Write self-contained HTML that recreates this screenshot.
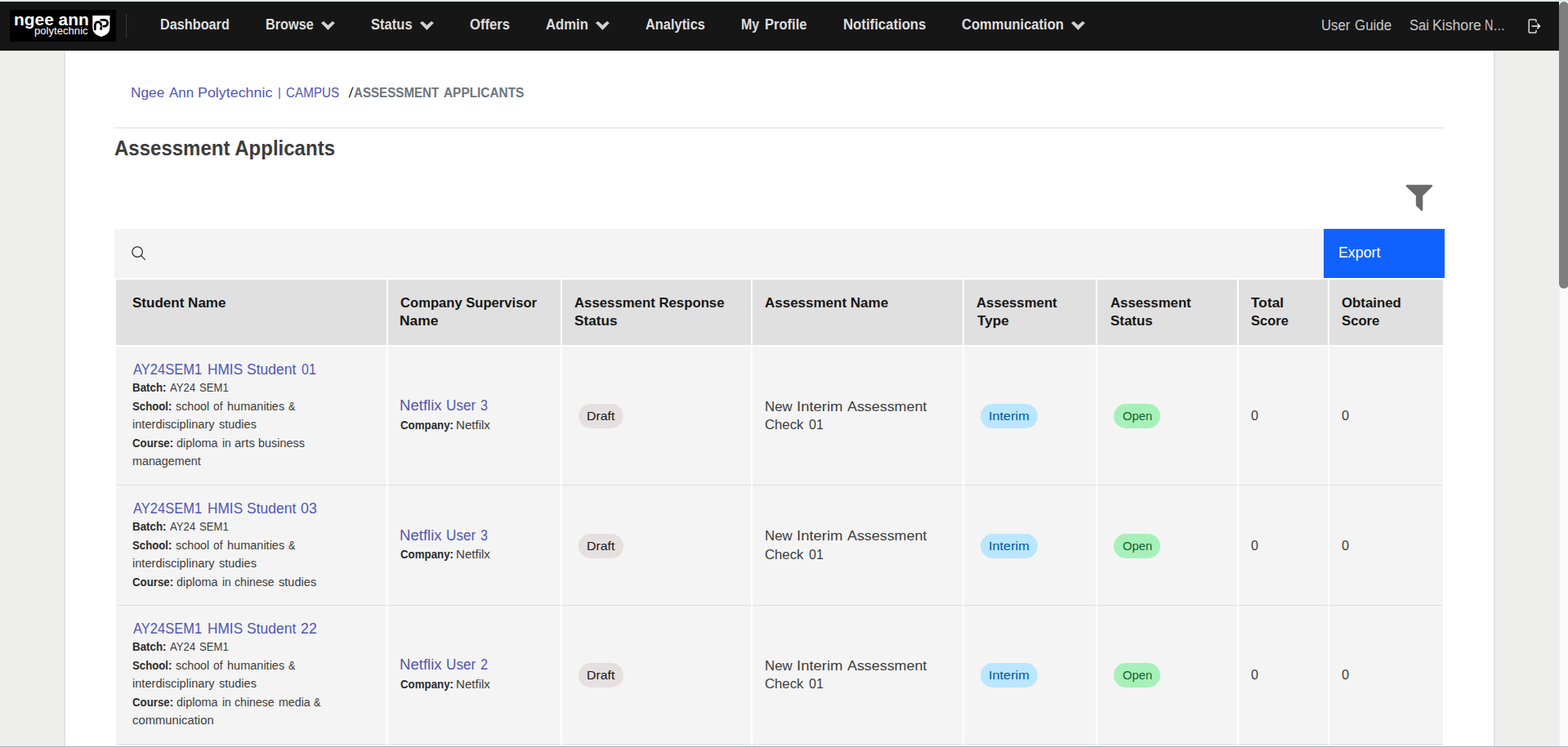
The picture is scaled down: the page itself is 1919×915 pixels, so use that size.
<!DOCTYPE html>
<html lang="en">
<head>
<meta charset="utf-8">
<title>Assessment Applicants</title>
<style>
*{box-sizing:border-box;margin:0;padding:0}
html,body{width:1919px;height:915px;overflow:hidden}
body{position:relative;background:#eeeeec;font-family:"Liberation Sans",Arial,sans-serif;color:#161616}
a{text-decoration:none}
.t{position:absolute;display:block;white-space:pre;line-height:1;transform-origin:0 0;margin:0}
.abs{position:absolute}
.topstrip{position:absolute;left:0;top:0;width:1919px;height:2px;background:linear-gradient(#dbe5e2 0,#dbe5e2 50%,#e4ecea 50%,#e4ecea 100%);z-index:5}
header.nav{position:absolute;left:0;top:2px;width:1908px;height:60px;background:#161616;z-index:3}
.logo{position:absolute;left:12px;top:10px;width:130px;height:39px;background:#000;display:block}
.divider{position:absolute;left:154px;top:15px;width:1px;height:30px;background:#393939}
main.container{position:absolute;left:80px;top:62px;width:1748px;height:853px;background:#fff;box-shadow:0 0 3px rgba(0,10,86,.18)}
hr.rule{position:absolute;left:60px;top:94px;width:1628px;height:1px;border:0;background:#e0e0e0}
.toolbar{position:absolute;left:60px;top:218px;width:1628px;height:60px;background:#f4f4f4}
.export{position:absolute;left:1480px;top:0;width:148px;height:60px;background:#0f62fe;border:0;display:block}
table.grid{position:absolute;left:62px;top:280px;width:1624px;border-collapse:separate;border-spacing:0;table-layout:fixed}
table.grid th,table.grid td{position:relative;padding:0;border-right:2px solid #fff;text-align:left;font-weight:normal;vertical-align:top}
table.grid th:last-child,table.grid td:last-child{border-right:0}
table.grid th{height:82px;background:#e0e0e0;border-bottom:2px solid #fff}
table.grid td{background:#f4f4f4;box-shadow:inset 0 -1px 0 #e0e0e0}
.tag{position:absolute;height:30px;border-radius:15px;display:block}
.tag-gray{background:#e5e0df}
.tag-blue{background:#bae6ff}
.tag-green{background:#a7f0ba}
.scroll{position:absolute;left:1908px;top:2px;width:11px;height:911px;background:linear-gradient(to right,#f1f1f0 0,#f7f7f7 1.5px,#fafafa 3px);z-index:4;overflow:hidden}
.thumb{position:absolute;left:0;top:0;width:12px;height:351px;border-radius:6px;background:#7e7e7e}
.bottomstrip{position:absolute;left:0;top:913px;width:1919px;height:2px;background:linear-gradient(#9eabb1 0,#9eabb1 50%,#d6e5ee 50%,#d6e5ee 100%);z-index:6}
</style>
</head>
<body>
<div class="topstrip"></div>
<header class="nav">
<a class="logo" href="#">
<span class="t" style="left:5.00px;top:1.00px;font-size:21px;font-weight:700;color:#ffffff;transform:scaleX(0.9955);">ngee ann</span>
<span class="t" style="left:30.00px;top:20.00px;font-size:12px;font-weight:400;color:#ffffff;transform:scaleX(1.0932);">polytechnic</span>
<svg class="abs" style="left:100px;top:6px" width="24" height="28" viewBox="112 18 24 28"><path d="M113.3 19 H134.4 V34 Q134.4 42 123.85 45.1 Q113.3 42 113.3 34 Z" fill="#fff"/><path d="M116.3 35.8 V30.6 A3.7 3.7 0 0 1 123.7 30.6" fill="none" stroke="#000" stroke-width="2.8" stroke-linecap="round"/><path d="M123.7 33.6 V35.6" fill="none" stroke="#000" stroke-width="2.8" stroke-linecap="round"/><path d="M123.8 24.4 H127.85 A3.85 3.85 0 0 1 127.85 32.1 H126.6" fill="none" stroke="#000" stroke-width="2.8" stroke-linecap="round"/></svg>
</a>
<span class="divider"></span>
<nav>
<a class="t" href="#" style="left:196.00px;top:19.00px;font-size:18px;font-weight:700;color:#dedede;transform:scaleX(0.9026);">Dashboard</a>
<a class="t" href="#" style="left:325.00px;top:19.00px;font-size:18px;font-weight:700;color:#dedede;transform:scaleX(0.9033);">Browse</a>
<a class="t" href="#" style="left:454.00px;top:19.00px;font-size:18px;font-weight:700;color:#dedede;transform:scaleX(0.9196);">Status</a>
<a class="t" href="#" style="left:575.00px;top:19.00px;font-size:18px;font-weight:700;color:#dedede;transform:scaleX(0.9222);">Offers</a>
<a class="t" href="#" style="left:668.00px;top:19.00px;font-size:18px;font-weight:700;color:#dedede;transform:scaleX(0.9267);">Admin</a>
<a class="t" href="#" style="left:790.00px;top:19.00px;font-size:18px;font-weight:700;color:#dedede;transform:scaleX(0.9107);">Analytics</a>
<a href="#"><span class="t" style="left:907.00px;top:19.00px;font-size:18px;font-weight:700;color:#dedede;transform:scaleX(0.8880);">My </span><span class="t" style="left:936.00px;top:19.00px;font-size:18px;font-weight:700;color:#dedede;transform:scaleX(0.9179);">Profile</span></a>
<a class="t" href="#" style="left:1032.00px;top:19.00px;font-size:18px;font-weight:700;color:#dedede;transform:scaleX(0.9303);">Notifications</a>
<a class="t" href="#" style="left:1177.00px;top:19.00px;font-size:18px;font-weight:700;color:#dedede;transform:scaleX(0.9179);">Communication</a>
<svg class="abs" style="left:393.0px;top:23.8px" width="17" height="11" viewBox="0 0 17 11"><polygon fill="#d2d2d2" stroke="#d2d2d2" stroke-width="0.6" stroke-linejoin="round" points="0.35,2.1 3.0,0.3 8.45,5.1 13.9,0.3 16.55,2.1 8.45,10.45"/></svg>
<svg class="abs" style="left:514.0px;top:23.8px" width="17" height="11" viewBox="0 0 17 11"><polygon fill="#d2d2d2" stroke="#d2d2d2" stroke-width="0.6" stroke-linejoin="round" points="0.35,2.1 3.0,0.3 8.45,5.1 13.9,0.3 16.55,2.1 8.45,10.45"/></svg>
<svg class="abs" style="left:729.0px;top:23.8px" width="17" height="11" viewBox="0 0 17 11"><polygon fill="#d2d2d2" stroke="#d2d2d2" stroke-width="0.6" stroke-linejoin="round" points="0.35,2.1 3.0,0.3 8.45,5.1 13.9,0.3 16.55,2.1 8.45,10.45"/></svg>
<svg class="abs" style="left:1311.0px;top:23.8px" width="17" height="11" viewBox="0 0 17 11"><polygon fill="#d2d2d2" stroke="#d2d2d2" stroke-width="0.6" stroke-linejoin="round" points="0.35,2.1 3.0,0.3 8.45,5.1 13.9,0.3 16.55,2.1 8.45,10.45"/></svg>
</nav>
<a href="#"><span class="t" style="left:1617.00px;top:20.00px;font-size:18px;font-weight:400;color:#c9c9c9;transform:scaleX(0.9263);">User </span><span class="t" style="left:1658.00px;top:20.00px;font-size:18px;font-weight:400;color:#c9c9c9;transform:scaleX(0.9380);">Guide</span></a>
<a href="#"><span class="t" style="left:1725.00px;top:20.00px;font-size:18px;font-weight:400;color:#c9c9c9;transform:scaleX(0.9145);">Sai </span><span class="t" style="left:1753.00px;top:20.00px;font-size:18px;font-weight:400;color:#c9c9c9;transform:scaleX(0.9806);">Kishore </span><span class="t" style="left:1817.00px;top:20.00px;font-size:18px;font-weight:400;color:#c9c9c9;transform:scaleX(0.8026);">N…</span></a>
<svg class="abs" style="left:1868px;top:20px" width="20" height="20" viewBox="0 0 20 20" fill="none" stroke="#dcdcdc" stroke-width="1.5"><path d="M12 5.2 V3.2 A1.2 1.2 0 0 0 10.8 2 H4.4 A1.2 1.2 0 0 0 3.2 3.2 V16.8 A1.2 1.2 0 0 0 4.4 18 H10.8 A1.2 1.2 0 0 0 12 16.8 V14.8"/><path stroke="#f0f0f0" d="M6.6 10 H16.2 M13.3 6.8 L16.5 10 L13.3 13.2"/></svg>
</header>
<main class="container">
<nav class="breadcrumb" aria-label="breadcrumb">
<a href="#"><span class="t" style="left:80.00px;top:43.00px;font-size:17px;font-weight:400;color:#5257b0;transform:scaleX(1.0173);">Ngee </span><span class="t" style="left:127.00px;top:43.00px;font-size:17px;font-weight:400;color:#5257b0;transform:scaleX(1.0016);">Ann </span><span class="t" style="left:162.00px;top:43.00px;font-size:17px;font-weight:400;color:#5257b0;transform:scaleX(1.0512);">Polytechnic </span><span class="t" style="left:260.00px;top:43.00px;font-size:15px;font-weight:400;color:#5257b0;transform:scaleX(1.0000);">|</span></a>
<a class="t" href="#" style="left:270.00px;top:44.00px;font-size:16px;font-weight:400;color:#5257b0;transform:scaleX(0.9530);">CAMPUS</a>
<span class="t" style="left:349.00px;top:43.00px;font-size:17px;font-weight:400;color:#000000;transform:scaleX(0.7615) skewX(-12deg);-webkit-text-stroke:0.35px #000000;">/</span>
<span><span class="t" style="left:353.00px;top:44.00px;font-size:16px;font-weight:700;color:#6c757d;transform:scaleX(0.9457);">ASSESSMENT </span><span class="t" style="left:463.00px;top:44.00px;font-size:16px;font-weight:700;color:#6c757d;transform:scaleX(0.9617);">APPLICANTS</span></span>
</nav>
<hr class="rule">
<h1 class="t" style="left:60.00px;top:107.00px;font-size:25.5px;font-weight:700;color:#3d3d3d;transform:scaleX(0.9416);">Assessment Applicants</h1>
<svg class="abs" style="left:1640px;top:163px" width="34" height="34" viewBox="0 0 34 34"><polygon fill="#6a6a6a" stroke="#6a6a6a" stroke-width="0.4" stroke-linejoin="round" points="1.5,1.3 32.3,1.3 32.8,1.9 32.8,3.0 21.1,14.5 21.1,32.3 20.5,32.8 19.5,32.8 13.1,26.4 13.1,14.5 1.0,3.0 1.0,1.9"/></svg>
<div class="toolbar">
<svg class="abs" style="left:20px;top:20px" width="20" height="20" viewBox="0 0 32 32"><path fill="#393939" d="M29,27.5859l-7.5521-7.5521a11.0177,11.0177,0,1,0-1.4141,1.4141L27.5859,29ZM4,13a9,9,0,1,1,9,9A9.01,9.01,0,0,1,4,13Z"/></svg>
<button class="export" type="button"><span class="t" style="left:18.00px;top:20.00px;font-size:18px;font-weight:400;color:#ffffff;transform:scaleX(0.9881);">Export</span></button>
</div>
<table class="grid">
<colgroup><col style="width:333px"><col style="width:213px"><col style="width:233px"><col style="width:259px"><col style="width:163px"><col style="width:173px"><col style="width:111px"><col style="width:139px"></colgroup>
<thead><tr>
<th scope="col"><span class="t" style="left:20.00px;top:20.00px;font-size:17px;font-weight:700;color:#161616;transform:scaleX(1.0016);">Student Name</span></th>
<th scope="col"><span class="t" style="left:15.00px;top:20.00px;font-size:17px;font-weight:700;color:#161616;transform:scaleX(0.9766);">Company Supervisor</span><span class="t" style="left:14.00px;top:42.00px;font-size:17px;font-weight:700;color:#161616;transform:scaleX(1.0246);">Name</span></th>
<th scope="col"><span class="t" style="left:15.00px;top:20.00px;font-size:17px;font-weight:700;color:#161616;transform:scaleX(0.9859);">Assessment Response</span><span class="t" style="left:15.00px;top:42.00px;font-size:17px;font-weight:700;color:#161616;transform:scaleX(1.0095);">Status</span></th>
<th scope="col"><span class="t" style="left:15.00px;top:20.00px;font-size:17px;font-weight:700;color:#161616;transform:scaleX(0.9993);">Assessment Name</span></th>
<th scope="col"><span class="t" style="left:15.00px;top:20.00px;font-size:17px;font-weight:700;color:#161616;transform:scaleX(0.9854);">Assessment</span><span class="t" style="left:16.00px;top:42.00px;font-size:17px;font-weight:700;color:#161616;transform:scaleX(1.0071);">Type</span></th>
<th scope="col"><span class="t" style="left:16.00px;top:20.00px;font-size:17px;font-weight:700;color:#161616;transform:scaleX(0.9854);">Assessment</span><span class="t" style="left:16.00px;top:42.00px;font-size:17px;font-weight:700;color:#161616;transform:scaleX(0.9955);">Status</span></th>
<th scope="col"><span class="t" style="left:15.00px;top:20.00px;font-size:17px;font-weight:700;color:#161616;transform:scaleX(1.0210);">Total</span><span class="t" style="left:15.00px;top:42.00px;font-size:17px;font-weight:700;color:#161616;transform:scaleX(0.9697);">Score</span></th>
<th scope="col"><span class="t" style="left:15.00px;top:20.00px;font-size:17px;font-weight:700;color:#161616;transform:scaleX(0.9870);">Obtained</span><span class="t" style="left:15.00px;top:42.00px;font-size:17px;font-weight:700;color:#161616;transform:scaleX(0.9816);">Score</span></th>
</tr></thead>
<tbody>
<tr style="height:170px">
<td style="height:170px"><a href="#"><span class="t" style="left:21.00px;top:19.00px;font-size:18px;font-weight:400;color:#5257b0;transform:scaleX(0.9184);">AY24SEM1 </span><span class="t" style="left:112.00px;top:19.00px;font-size:18px;font-weight:400;color:#5257b0;transform:scaleX(0.9593);">HMIS </span><span class="t" style="left:160.00px;top:19.00px;font-size:18px;font-weight:400;color:#5257b0;transform:scaleX(0.9746);">Student </span><span class="t" style="left:227.00px;top:19.00px;font-size:18px;font-weight:400;color:#5257b0;transform:scaleX(0.8868);">01</span></a><b class="t" style="left:20.00px;top:43.00px;font-size:14px;font-weight:700;color:#2c2c2c;transform:scaleX(0.9535);">Batch:</b><span><span class="t" style="left:66.00px;top:43.00px;font-size:14px;font-weight:400;color:#3d3d3d;transform:scaleX(0.9423);">AY24 </span><span class="t" style="left:102.00px;top:43.00px;font-size:14px;font-weight:400;color:#3d3d3d;transform:scaleX(0.9356);">SEM1</span></span><b class="t" style="left:20.00px;top:66.00px;font-size:14px;font-weight:700;color:#2c2c2c;transform:scaleX(0.9417);">School:</b><span><span class="t" style="left:73.00px;top:66.00px;font-size:14px;font-weight:400;color:#3d3d3d;transform:scaleX(1.0181);">school </span><span class="t" style="left:119.00px;top:66.00px;font-size:14px;font-weight:400;color:#3d3d3d;transform:scaleX(0.9821);">of </span><span class="t" style="left:136.00px;top:66.00px;font-size:14px;font-weight:400;color:#3d3d3d;transform:scaleX(1.0368);">humanities </span><span class="t" style="left:211.00px;top:66.00px;font-size:14px;font-weight:400;color:#3d3d3d;transform:scaleX(0.9029);">&amp;</span></span><span><span class="t" style="left:20.00px;top:88.00px;font-size:14px;font-weight:400;color:#3d3d3d;transform:scaleX(1.0427);">interdisciplinary </span><span class="t" style="left:126.00px;top:88.00px;font-size:14px;font-weight:400;color:#3d3d3d;transform:scaleX(1.0345);">studies</span></span><b class="t" style="left:20.00px;top:111.00px;font-size:14px;font-weight:700;color:#2c2c2c;transform:scaleX(0.9461);">Course:</b><span><span class="t" style="left:74.00px;top:111.00px;font-size:14px;font-weight:400;color:#3d3d3d;transform:scaleX(1.0294);">diploma </span><span class="t" style="left:130.00px;top:111.00px;font-size:14px;font-weight:400;color:#3d3d3d;transform:scaleX(0.9962);">in </span><span class="t" style="left:145.00px;top:111.00px;font-size:14px;font-weight:400;color:#3d3d3d;transform:scaleX(1.0675);">arts </span><span class="t" style="left:174.00px;top:111.00px;font-size:14px;font-weight:400;color:#3d3d3d;transform:scaleX(1.0295);">business</span></span><span class="t" style="left:20.00px;top:133.00px;font-size:14px;font-weight:400;color:#3d3d3d;transform:scaleX(1.0232);">management</span></td>
<td><a href="#"><span class="t" style="left:14.00px;top:63.00px;font-size:18px;font-weight:400;color:#5257b0;transform:scaleX(1.0324);">Netflix </span><span class="t" style="left:71.00px;top:63.00px;font-size:18px;font-weight:400;color:#5257b0;transform:scaleX(0.9540);">User </span><span class="t" style="left:113.00px;top:63.00px;font-size:18px;font-weight:400;color:#5257b0;transform:scaleX(0.8931);">3</span></a><b class="t" style="left:15.00px;top:89.00px;font-size:14px;font-weight:700;color:#2c2c2c;transform:scaleX(0.9493);">Company:</b><span class="t" style="left:83.00px;top:89.00px;font-size:14px;font-weight:400;color:#3d3d3d;transform:scaleX(1.0761);">Netfilx</span></td>
<td><span class="tag tag-gray" style="left:20px;top:70.0px;width:55px"><span class="t" style="left:10.00px;top:7.00px;font-size:15px;font-weight:400;color:#171414;transform:scaleX(1.0589);">Draft</span></span></td>
<td><span><span class="t" style="left:15.00px;top:65.00px;font-size:17px;font-weight:400;color:#3d3d3d;transform:scaleX(0.9905);">New </span><span class="t" style="left:54.00px;top:65.00px;font-size:17px;font-weight:400;color:#3d3d3d;transform:scaleX(1.0874);">Interim </span><span class="t" style="left:116.00px;top:65.00px;font-size:17px;font-weight:400;color:#3d3d3d;transform:scaleX(1.0508);">Assessment</span></span><span><span class="t" style="left:15.00px;top:87.00px;font-size:17px;font-weight:400;color:#3d3d3d;transform:scaleX(0.9824);">Check </span><span class="t" style="left:69.00px;top:87.00px;font-size:17px;font-weight:400;color:#3d3d3d;transform:scaleX(0.9406);">01</span></span></td>
<td><span class="tag tag-blue" style="left:20px;top:70.0px;width:70px"><span class="t" style="left:10.00px;top:7.00px;font-size:15px;font-weight:400;color:#00539a;transform:scaleX(1.0843);">Interim</span></span></td>
<td><span class="tag tag-green" style="left:20px;top:70.0px;width:57px"><span class="t" style="left:11.00px;top:7.00px;font-size:15px;font-weight:400;color:#0e6027;transform:scaleX(0.9868);">Open</span></span></td>
<td><span class="t" style="left:15.00px;top:76.00px;font-size:17px;font-weight:400;color:#3d3d3d;transform:scaleX(0.9524);">0</span></td>
<td><span class="t" style="left:15.00px;top:76.00px;font-size:17px;font-weight:400;color:#3d3d3d;transform:scaleX(0.9624);">0</span></td>
</tr>
<tr style="height:147px">
<td style="height:147px"><a href="#"><span class="t" style="left:21.00px;top:19.00px;font-size:18px;font-weight:400;color:#5257b0;transform:scaleX(0.9184);">AY24SEM1 </span><span class="t" style="left:112.00px;top:19.00px;font-size:18px;font-weight:400;color:#5257b0;transform:scaleX(0.9593);">HMIS </span><span class="t" style="left:160.00px;top:19.00px;font-size:18px;font-weight:400;color:#5257b0;transform:scaleX(0.9746);">Student </span><span class="t" style="left:226.00px;top:19.00px;font-size:18px;font-weight:400;color:#5257b0;transform:scaleX(0.9887);">03</span></a><b class="t" style="left:20.00px;top:43.00px;font-size:14px;font-weight:700;color:#2c2c2c;transform:scaleX(0.9535);">Batch:</b><span><span class="t" style="left:66.00px;top:43.00px;font-size:14px;font-weight:400;color:#3d3d3d;transform:scaleX(0.9423);">AY24 </span><span class="t" style="left:102.00px;top:43.00px;font-size:14px;font-weight:400;color:#3d3d3d;transform:scaleX(0.9356);">SEM1</span></span><b class="t" style="left:20.00px;top:66.00px;font-size:14px;font-weight:700;color:#2c2c2c;transform:scaleX(0.9417);">School:</b><span><span class="t" style="left:73.00px;top:66.00px;font-size:14px;font-weight:400;color:#3d3d3d;transform:scaleX(1.0181);">school </span><span class="t" style="left:119.00px;top:66.00px;font-size:14px;font-weight:400;color:#3d3d3d;transform:scaleX(0.9821);">of </span><span class="t" style="left:136.00px;top:66.00px;font-size:14px;font-weight:400;color:#3d3d3d;transform:scaleX(1.0368);">humanities </span><span class="t" style="left:211.00px;top:66.00px;font-size:14px;font-weight:400;color:#3d3d3d;transform:scaleX(0.9029);">&amp;</span></span><span><span class="t" style="left:20.00px;top:88.00px;font-size:14px;font-weight:400;color:#3d3d3d;transform:scaleX(1.0427);">interdisciplinary </span><span class="t" style="left:126.00px;top:88.00px;font-size:14px;font-weight:400;color:#3d3d3d;transform:scaleX(1.0345);">studies</span></span><b class="t" style="left:20.00px;top:111.00px;font-size:14px;font-weight:700;color:#2c2c2c;transform:scaleX(0.9461);">Course:</b><span><span class="t" style="left:74.00px;top:111.00px;font-size:14px;font-weight:400;color:#3d3d3d;transform:scaleX(1.0294);">diploma </span><span class="t" style="left:130.00px;top:111.00px;font-size:14px;font-weight:400;color:#3d3d3d;transform:scaleX(0.9962);">in </span><span class="t" style="left:145.00px;top:111.00px;font-size:14px;font-weight:400;color:#3d3d3d;transform:scaleX(1.0077);">chinese </span><span class="t" style="left:199.00px;top:111.00px;font-size:14px;font-weight:400;color:#3d3d3d;transform:scaleX(1.0435);">studies</span></span></td>
<td><a href="#"><span class="t" style="left:14.00px;top:52.00px;font-size:18px;font-weight:400;color:#5257b0;transform:scaleX(1.0324);">Netflix </span><span class="t" style="left:71.00px;top:52.00px;font-size:18px;font-weight:400;color:#5257b0;transform:scaleX(0.9540);">User </span><span class="t" style="left:113.00px;top:52.00px;font-size:18px;font-weight:400;color:#5257b0;transform:scaleX(0.8931);">3</span></a><b class="t" style="left:15.00px;top:77.00px;font-size:14px;font-weight:700;color:#2c2c2c;transform:scaleX(0.9493);">Company:</b><span class="t" style="left:83.00px;top:77.00px;font-size:14px;font-weight:400;color:#3d3d3d;transform:scaleX(1.0761);">Netfilx</span></td>
<td><span class="tag tag-gray" style="left:20px;top:59.0px;width:55px"><span class="t" style="left:10.00px;top:7.00px;font-size:15px;font-weight:400;color:#171414;transform:scaleX(1.0589);">Draft</span></span></td>
<td><span><span class="t" style="left:15.00px;top:53.00px;font-size:17px;font-weight:400;color:#3d3d3d;transform:scaleX(0.9905);">New </span><span class="t" style="left:54.00px;top:53.00px;font-size:17px;font-weight:400;color:#3d3d3d;transform:scaleX(1.0874);">Interim </span><span class="t" style="left:116.00px;top:53.00px;font-size:17px;font-weight:400;color:#3d3d3d;transform:scaleX(1.0508);">Assessment</span></span><span><span class="t" style="left:15.00px;top:76.00px;font-size:17px;font-weight:400;color:#3d3d3d;transform:scaleX(0.9824);">Check </span><span class="t" style="left:69.00px;top:76.00px;font-size:17px;font-weight:400;color:#3d3d3d;transform:scaleX(0.9406);">01</span></span></td>
<td><span class="tag tag-blue" style="left:20px;top:59.0px;width:70px"><span class="t" style="left:10.00px;top:7.00px;font-size:15px;font-weight:400;color:#00539a;transform:scaleX(1.0843);">Interim</span></span></td>
<td><span class="tag tag-green" style="left:20px;top:59.0px;width:57px"><span class="t" style="left:11.00px;top:7.00px;font-size:15px;font-weight:400;color:#0e6027;transform:scaleX(0.9868);">Open</span></span></td>
<td><span class="t" style="left:15.00px;top:65.00px;font-size:17px;font-weight:400;color:#3d3d3d;transform:scaleX(0.9524);">0</span></td>
<td><span class="t" style="left:15.00px;top:65.00px;font-size:17px;font-weight:400;color:#3d3d3d;transform:scaleX(0.9624);">0</span></td>
</tr>
<tr style="height:170px">
<td style="height:170px"><a href="#"><span class="t" style="left:21.00px;top:19.00px;font-size:18px;font-weight:400;color:#5257b0;transform:scaleX(0.9184);">AY24SEM1 </span><span class="t" style="left:112.00px;top:19.00px;font-size:18px;font-weight:400;color:#5257b0;transform:scaleX(0.9593);">HMIS </span><span class="t" style="left:160.00px;top:19.00px;font-size:18px;font-weight:400;color:#5257b0;transform:scaleX(0.9746);">Student </span><span class="t" style="left:226.00px;top:19.00px;font-size:18px;font-weight:400;color:#5257b0;transform:scaleX(0.9871);">22</span></a><b class="t" style="left:20.00px;top:43.00px;font-size:14px;font-weight:700;color:#2c2c2c;transform:scaleX(0.9535);">Batch:</b><span><span class="t" style="left:66.00px;top:43.00px;font-size:14px;font-weight:400;color:#3d3d3d;transform:scaleX(0.9423);">AY24 </span><span class="t" style="left:102.00px;top:43.00px;font-size:14px;font-weight:400;color:#3d3d3d;transform:scaleX(0.9356);">SEM1</span></span><b class="t" style="left:20.00px;top:66.00px;font-size:14px;font-weight:700;color:#2c2c2c;transform:scaleX(0.9417);">School:</b><span><span class="t" style="left:73.00px;top:66.00px;font-size:14px;font-weight:400;color:#3d3d3d;transform:scaleX(1.0181);">school </span><span class="t" style="left:119.00px;top:66.00px;font-size:14px;font-weight:400;color:#3d3d3d;transform:scaleX(0.9821);">of </span><span class="t" style="left:136.00px;top:66.00px;font-size:14px;font-weight:400;color:#3d3d3d;transform:scaleX(1.0368);">humanities </span><span class="t" style="left:211.00px;top:66.00px;font-size:14px;font-weight:400;color:#3d3d3d;transform:scaleX(0.9029);">&amp;</span></span><span><span class="t" style="left:20.00px;top:88.00px;font-size:14px;font-weight:400;color:#3d3d3d;transform:scaleX(1.0427);">interdisciplinary </span><span class="t" style="left:126.00px;top:88.00px;font-size:14px;font-weight:400;color:#3d3d3d;transform:scaleX(1.0345);">studies</span></span><b class="t" style="left:20.00px;top:111.00px;font-size:14px;font-weight:700;color:#2c2c2c;transform:scaleX(0.9461);">Course:</b><span><span class="t" style="left:74.00px;top:111.00px;font-size:14px;font-weight:400;color:#3d3d3d;transform:scaleX(1.0294);">diploma </span><span class="t" style="left:130.00px;top:111.00px;font-size:14px;font-weight:400;color:#3d3d3d;transform:scaleX(0.9962);">in </span><span class="t" style="left:145.00px;top:111.00px;font-size:14px;font-weight:400;color:#3d3d3d;transform:scaleX(1.0077);">chinese </span><span class="t" style="left:199.00px;top:111.00px;font-size:14px;font-weight:400;color:#3d3d3d;transform:scaleX(1.0166);">media </span><span class="t" style="left:242.00px;top:111.00px;font-size:14px;font-weight:400;color:#3d3d3d;transform:scaleX(0.9029);">&amp;</span></span><span class="t" style="left:20.00px;top:133.00px;font-size:14px;font-weight:400;color:#3d3d3d;transform:scaleX(1.0581);">communication</span></td>
<td><a href="#"><span class="t" style="left:14.00px;top:63.00px;font-size:18px;font-weight:400;color:#5257b0;transform:scaleX(1.0324);">Netflix </span><span class="t" style="left:71.00px;top:63.00px;font-size:18px;font-weight:400;color:#5257b0;transform:scaleX(0.9540);">User </span><span class="t" style="left:113.00px;top:63.00px;font-size:18px;font-weight:400;color:#5257b0;transform:scaleX(0.9024);">2</span></a><b class="t" style="left:15.00px;top:89.00px;font-size:14px;font-weight:700;color:#2c2c2c;transform:scaleX(0.9493);">Company:</b><span class="t" style="left:83.00px;top:89.00px;font-size:14px;font-weight:400;color:#3d3d3d;transform:scaleX(1.0761);">Netfilx</span></td>
<td><span class="tag tag-gray" style="left:20px;top:70.0px;width:55px"><span class="t" style="left:10.00px;top:7.00px;font-size:15px;font-weight:400;color:#171414;transform:scaleX(1.0589);">Draft</span></span></td>
<td><span><span class="t" style="left:15.00px;top:65.00px;font-size:17px;font-weight:400;color:#3d3d3d;transform:scaleX(0.9905);">New </span><span class="t" style="left:54.00px;top:65.00px;font-size:17px;font-weight:400;color:#3d3d3d;transform:scaleX(1.0874);">Interim </span><span class="t" style="left:116.00px;top:65.00px;font-size:17px;font-weight:400;color:#3d3d3d;transform:scaleX(1.0508);">Assessment</span></span><span><span class="t" style="left:15.00px;top:87.00px;font-size:17px;font-weight:400;color:#3d3d3d;transform:scaleX(0.9824);">Check </span><span class="t" style="left:69.00px;top:87.00px;font-size:17px;font-weight:400;color:#3d3d3d;transform:scaleX(0.9406);">01</span></span></td>
<td><span class="tag tag-blue" style="left:20px;top:70.0px;width:70px"><span class="t" style="left:10.00px;top:7.00px;font-size:15px;font-weight:400;color:#00539a;transform:scaleX(1.0843);">Interim</span></span></td>
<td><span class="tag tag-green" style="left:20px;top:70.0px;width:57px"><span class="t" style="left:11.00px;top:7.00px;font-size:15px;font-weight:400;color:#0e6027;transform:scaleX(0.9868);">Open</span></span></td>
<td><span class="t" style="left:15.00px;top:76.00px;font-size:17px;font-weight:400;color:#3d3d3d;transform:scaleX(0.9524);">0</span></td>
<td><span class="t" style="left:15.00px;top:76.00px;font-size:17px;font-weight:400;color:#3d3d3d;transform:scaleX(0.9624);">0</span></td>
</tr>
<tr style="height:60px"><td style="height:60px"></td><td style="height:60px"></td><td style="height:60px"></td><td style="height:60px"></td><td style="height:60px"></td><td style="height:60px"></td><td style="height:60px"></td><td style="height:60px"></td></tr>
</tbody></table>
</main>
<div class="scroll"><div class="thumb"></div></div>
<div class="bottomstrip"></div>
</body>
</html>
